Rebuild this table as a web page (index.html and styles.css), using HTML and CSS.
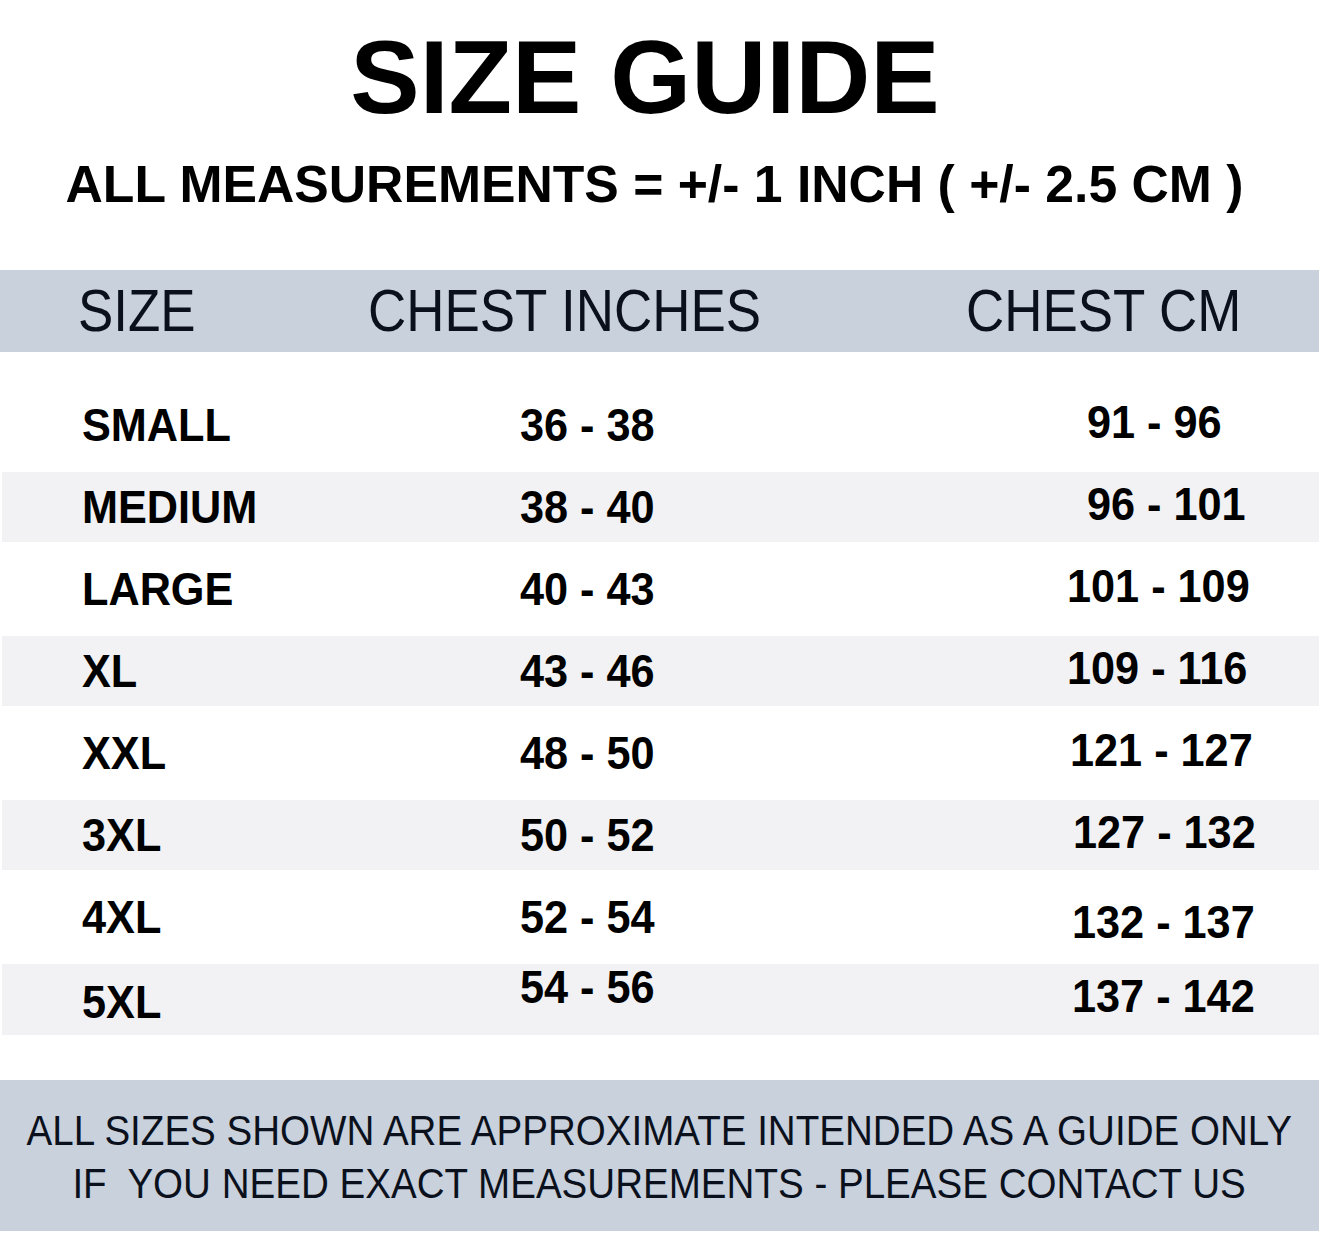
FILE: index.html
```html
<!DOCTYPE html>
<html lang="en">
<head>
<meta charset="utf-8">
<title>Size Guide</title>
<link rel="stylesheet" href="styles.css">
</head>
<body>
<main class="guide">
  <h1 class="title">SIZE GUIDE</h1>
  <p class="subtitle">ALL MEASUREMENTS = +/- 1 INCH ( +/- 2.5 CM )</p>

  <div class="head-bar">
    <span class="head-cell"><span class="cond">SIZE</span></span>
    <span class="head-cell"><span class="cond">CHEST INCHES</span></span>
    <span class="head-cell"><span class="cond">CHEST CM</span></span>
  </div>

  <div class="rows">
    <div class="row">
      <span class="cell"><span class="nar">SMALL</span></span>
      <span class="cell"><span class="nar">36 - 38</span></span>
      <span class="cell cm in"><span class="nar">91 - 96</span></span>
    </div>
    <div class="row alt">
      <span class="cell"><span class="nar">MEDIUM</span></span>
      <span class="cell"><span class="nar">38 - 40</span></span>
      <span class="cell cm in"><span class="nar">96 - 101</span></span>
    </div>
    <div class="row">
      <span class="cell"><span class="nar">LARGE</span></span>
      <span class="cell"><span class="nar">40 - 43</span></span>
      <span class="cell cm left"><span class="nar">101 - 109</span></span>
    </div>
    <div class="row alt">
      <span class="cell"><span class="nar">XL</span></span>
      <span class="cell"><span class="nar">43 - 46</span></span>
      <span class="cell cm left"><span class="nar">109 - 116</span></span>
    </div>
    <div class="row">
      <span class="cell"><span class="nar">XXL</span></span>
      <span class="cell"><span class="nar">48 - 50</span></span>
      <span class="cell cm"><span class="nar">121 - 127</span></span>
    </div>
    <div class="row alt">
      <span class="cell"><span class="nar">3XL</span></span>
      <span class="cell"><span class="nar">50 - 52</span></span>
      <span class="cell cm wide"><span class="nar">127 - 132</span></span>
    </div>
    <div class="row">
      <span class="cell"><span class="nar">4XL</span></span>
      <span class="cell"><span class="nar">52 - 54</span></span>
      <span class="cell cm low"><span class="nar">132 - 137</span></span>
    </div>
    <div class="row alt">
      <span class="cell"><span class="nar">5XL</span></span>
      <span class="cell high"><span class="nar">54 - 56</span></span>
      <span class="cell cm mid"><span class="nar">137 - 142</span></span>
    </div>
  </div>

  <div class="note">
    <p class="note-line">ALL SIZES SHOWN ARE APPROXIMATE INTENDED AS A GUIDE ONLY</p>
    <p class="note-line">IF&nbsp; YOU NEED EXACT MEASUREMENTS - PLEASE CONTACT US</p>
  </div>
</main>
</body>
</html>
```

FILE: styles.css
```css
* {
  box-sizing: border-box;
}

html, body {
  margin: 0;
  padding: 0;
  background: #ffffff;
}

body {
  font-family: "Liberation Sans", Arial, Helvetica, sans-serif;
  color: #000000;
  width: 1319px;
  height: 1242px;
  overflow: hidden;
}

.guide {
  display: flex;
  flex-direction: column;
}

.title {
  margin: 25px 0 0;
  padding-right: 29px;
  font-size: 104px;
  line-height: 104px;
  font-weight: 700;
  text-align: center;
}

.subtitle {
  margin: 29px 0 0;
  padding-right: 10px;
  font-size: 51.7px;
  line-height: 52px;
  font-weight: 700;
  text-align: center;
}

.head-bar {
  margin-top: 60px;
  height: 82px;
  background: #c9d1dc;
  display: grid;
  grid-template-columns: 290px 598px 1fr;
  padding-left: 78px;
  color: #0b111c;
  font-size: 60px;
  line-height: 82px;
  font-weight: 400;
}

.cond {
  display: inline-block;
  transform: scaleX(0.882);
  transform-origin: left center;
  white-space: nowrap;
}

.rows {
  margin-top: 26px;
  display: flex;
  flex-direction: column;
}

.row {
  height: 94px;
  display: grid;
  grid-template-columns: 438px 550px 1fr;
  align-items: center;
  padding-left: 82px;
  font-size: 46px;
  line-height: 46px;
  font-weight: 700;
}

.row.alt {
  height: 70px;
  background: #f2f2f4;
  margin-left: 2px;
  padding-left: 80px;
}

.row:last-child {
  height: 71px;
}

.cell {
  display: block;
  white-space: nowrap;
}

.nar {
  display: inline-block;
  transform: scaleX(0.94);
  transform-origin: left center;
}

.cm {
  margin-bottom: 6px;
}

.cm.in {
  padding-left: 17px;
}

.cm.left {
  margin-left: -3px;
}

.cm.wide {
  padding-left: 3px;
}

.cm.low {
  margin-bottom: 0;
  margin-top: 10px;
  padding-left: 2px;
}

.cm.mid {
  margin-bottom: 12px;
  padding-left: 2px;
}

.high {
  margin-bottom: 29px;
}

.note {
  margin-top: 45px;
  background: #c9d1dc;
  padding: 24px 0 21px;
  color: #0b111c;
  display: flex;
  flex-direction: column;
  align-items: center;
}

.note-line {
  margin: 0;
  font-size: 42px;
  line-height: 53px;
  white-space: nowrap;
  transform: scaleX(0.918);
  transform-origin: center center;
}
```
